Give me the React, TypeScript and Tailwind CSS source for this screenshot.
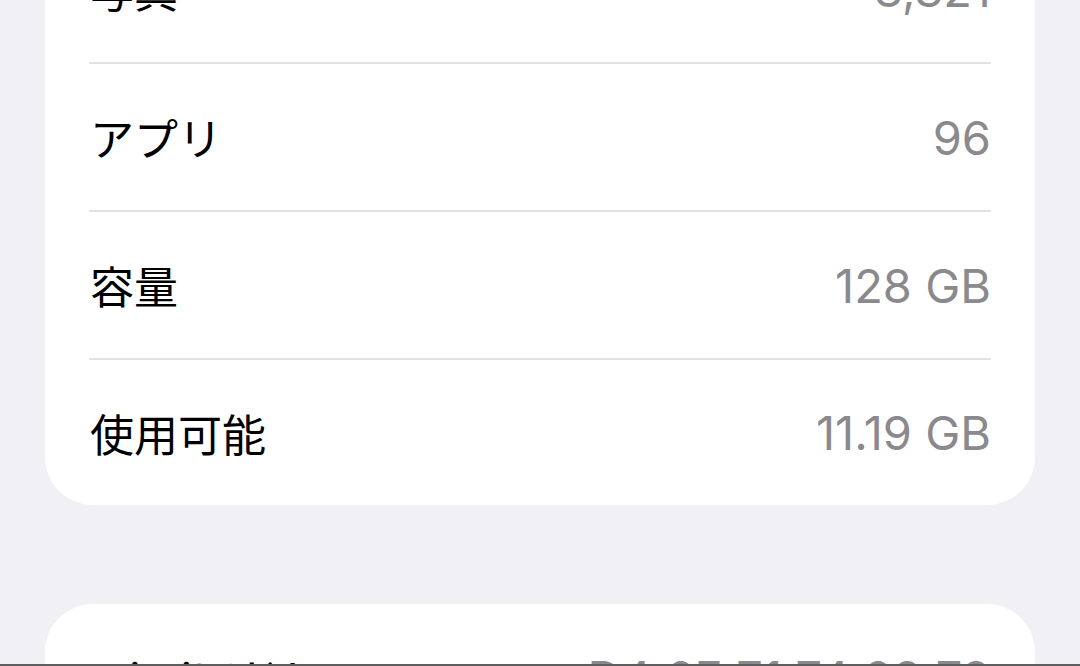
import React from "react";

type Row = { label: string; value: string };

const STORAGE: Row[] = [
  { label: "写真", value: "8,321" },
  { label: "アプリ", value: "96" },
  { label: "容量", value: "128 GB" },
  { label: "使用可能", value: "11.19 GB" },
];

const NETWORK: Row[] = [
  { label: "Wi-Fiアドレス", value: "D4:6E:71:74:09:79" },
  { label: "Bluetooth", value: "D4:6E:71:6A:1C:02" },
];

const labelFont = {
  fontFamily: '"Noto Sans CJK JP", "Noto Sans", sans-serif',
};
const valueFont = {
  fontFamily: 'Inter, "Noto Sans CJK JP", sans-serif',
};

function Card({ rows }: { rows: Row[] }) {
  return (
    <div className="rounded-[48px] bg-white px-[44px]">
      {rows.map((r, i) => (
        <div
          key={r.label}
          className={
            "flex items-center justify-between " +
            (i < rows.length - 1
              ? "h-[148px] border-b-2 border-[#e2e2e5]"
              : "h-[145px]")
          }
        >
          <span className="pl-px text-[44px] leading-none text-black" style={labelFont}>
            {r.label}
          </span>
          <span className="text-[47px] leading-none text-[#8a8a8e]" style={valueFont}>
            {r.value}
          </span>
        </div>
      ))}
    </div>
  );
}

export default function App() {
  return (
    <div className="h-[666px] w-[1080px] overflow-hidden border-b-2 border-[#5e5e60] bg-[#f0f0f5]">
      <div className="-mt-[84px] flex flex-col gap-[99px] px-[45px]">
        <Card rows={STORAGE} />
        <Card rows={NETWORK} />
      </div>
    </div>
  );
}
